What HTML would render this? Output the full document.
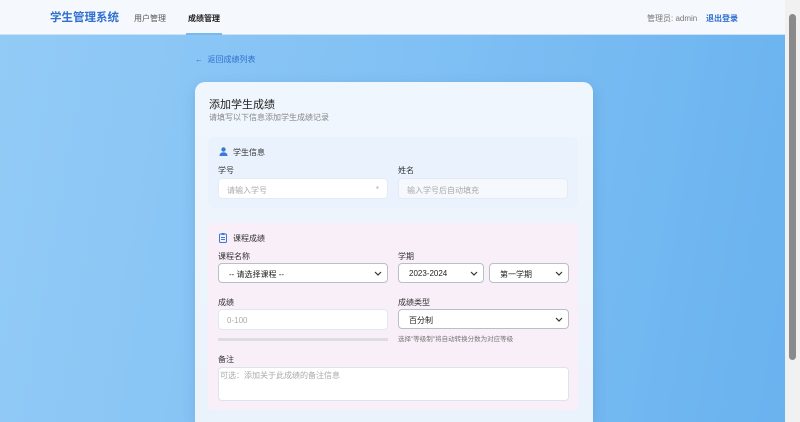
<!DOCTYPE html>
<html><head><meta charset="utf-8"><style>
*{box-sizing:border-box;margin:0;padding:0}
html,body{width:800px;height:422px;overflow:hidden}
body{font-family:"Liberation Sans","Noto Sans CJK SC",sans-serif;background:linear-gradient(100deg,#93cbf6 0%,#80c0f4 50%,#68b2ef 100%);position:relative}
.hdr{position:absolute;left:0;top:0;width:785px;height:35px;background:#f5f8fc;border-bottom:1px solid #cfe0f2}
.logo{position:absolute;left:50px;top:9px;font-size:11.5px;font-weight:bold;color:#2f6fd0}
.nav{position:absolute;top:13px;font-size:8px;color:#555}
.nav.act{color:#222;font-weight:bold}
.ul{position:absolute;left:186px;top:33px;width:36px;height:2px;background:#7ab8ef}
.sb{position:absolute;right:0;top:0;width:15px;height:422px;background:#f1f1f1}
.sb i{position:absolute;left:4px;top:14px;width:7px;height:346px;background:#8a8a8a;border-radius:4px}
.back{position:absolute;left:195px;top:54px;font-size:8px;color:#2f6fd0}
.card{position:absolute;left:195px;top:82px;width:398px;height:340px;background:linear-gradient(180deg,#f0f6fd,#eaf2fc);border-radius:10px 10px 0 0;box-shadow:0 4px 14px rgba(0,60,120,.15)}
.t{position:absolute;left:14px;top:14px;font-size:11px;color:#222}
.st{position:absolute;left:14px;top:30px;font-size:8px;color:#888}
.sec{position:absolute;left:13px;width:370px;border-radius:5px}
.lbl{position:absolute;font-size:8px;color:#333}
.in{position:absolute;height:21px;background:#fff;border:1px solid #e3ecf6;border-radius:4px;font-size:8px;color:#aaa;padding:6px 8px}
.sel{position:absolute;height:20px;background:#fff;border:1px solid #b9bfc8;border-radius:4px;font-size:8px;color:#222;padding:5px 10px}
.sel svg{position:absolute;right:5px;top:7px}
</style></head><body>
<div class="hdr">
<div class="logo">学生管理系统</div>
<div class="nav" style="left:134px">用户管理</div>
<div class="nav act" style="left:188px">成绩管理</div>
<div class="ul"></div>
<div class="nav" style="left:647px;color:#777">管理员: admin</div>
<div class="nav" style="left:706px;color:#2f6fd0;font-weight:bold">退出登录</div>
</div>
<div class="back">←&nbsp; 返回成绩列表</div>
<div class="card">
<div class="t">添加学生成绩</div>
<div class="st">请填写以下信息添加学生成绩记录</div>
<div class="sec" style="top:55px;height:71px;background:#eaf3fd">
 <svg style="position:absolute;left:11px;top:10px" width="9" height="9" viewBox="0 0 9 9"><circle cx="4.5" cy="2.5" r="2.2" fill="#3a7ad8"/><path d="M0.5 9 Q0.5 5.2 4.5 5.2 Q8.5 5.2 8.5 9Z" fill="#3a7ad8"/></svg>
 <div class="lbl" style="left:25px;top:10px">学生信息</div>
 <div class="lbl" style="left:10px;top:28px">学号</div>
 <div class="in" style="left:10px;top:41px;width:170px">请输入学号<span style="float:right">*</span></div>
 <div class="lbl" style="left:190px;top:28px">姓名</div>
 <div class="in" style="left:190px;top:41px;width:170px;background:#f5f8fc">输入学号后自动填充</div>
</div>
<div class="sec" style="top:141px;height:187px;background:#f8eff8">
 <svg style="position:absolute;left:11px;top:10px" width="8" height="10" viewBox="0 0 8 10"><rect x="0.5" y="1" width="7" height="8.5" rx="1" fill="none" stroke="#3a7ad8" stroke-width="1"/><rect x="2.5" y="0" width="3" height="2" fill="#3a7ad8"/><path d="M2 4.5H6M2 6.5H6" stroke="#3a7ad8" stroke-width="1"/></svg>
 <div class="lbl" style="left:25px;top:10px">课程成绩</div>
 <div class="lbl" style="left:10px;top:28px">课程名称</div>
 <div class="sel" style="left:10px;top:40px;width:170px">-- 请选择课程 --<svg width="8" height="5"><path d="M1 1L4 4L7 1" fill="none" stroke="#333" stroke-width="1.2"/></svg></div>
 <div class="lbl" style="left:190px;top:28px">学期</div>
 <div class="sel" style="left:190px;top:40px;width:86px">2023-2024<svg width="8" height="5"><path d="M1 1L4 4L7 1" fill="none" stroke="#333" stroke-width="1.2"/></svg></div>
 <div class="sel" style="left:281px;top:40px;width:80px">第一学期<svg width="8" height="5"><path d="M1 1L4 4L7 1" fill="none" stroke="#333" stroke-width="1.2"/></svg></div>
 <div class="lbl" style="left:10px;top:74px">成绩</div>
 <div class="in" style="left:10px;top:86px;width:170px;border-color:#dde9f7">0-100</div>
 <div style="position:absolute;left:10px;top:115px;width:170px;height:3px;background:#dcdde2"></div>
 <div class="lbl" style="left:190px;top:74px">成绩类型</div>
 <div class="sel" style="left:190px;top:86px;width:171px">百分制<svg width="8" height="5"><path d="M1 1L4 4L7 1" fill="none" stroke="#333" stroke-width="1.2"/></svg></div>
 <div class="lbl" style="left:190px;top:110px;font-size:6.5px;color:#777">选择"等级制"将自动转换分数为对应等级</div>
 <div class="lbl" style="left:10px;top:131px">备注</div>
 <div class="in" style="left:10px;top:144px;width:351px;height:34px;padding:2px 1px;border-color:#dde3ec">可选：添加关于此成绩的备注信息</div>
</div>
</div>
<div class="sb"><i></i></div>
</body></html>
